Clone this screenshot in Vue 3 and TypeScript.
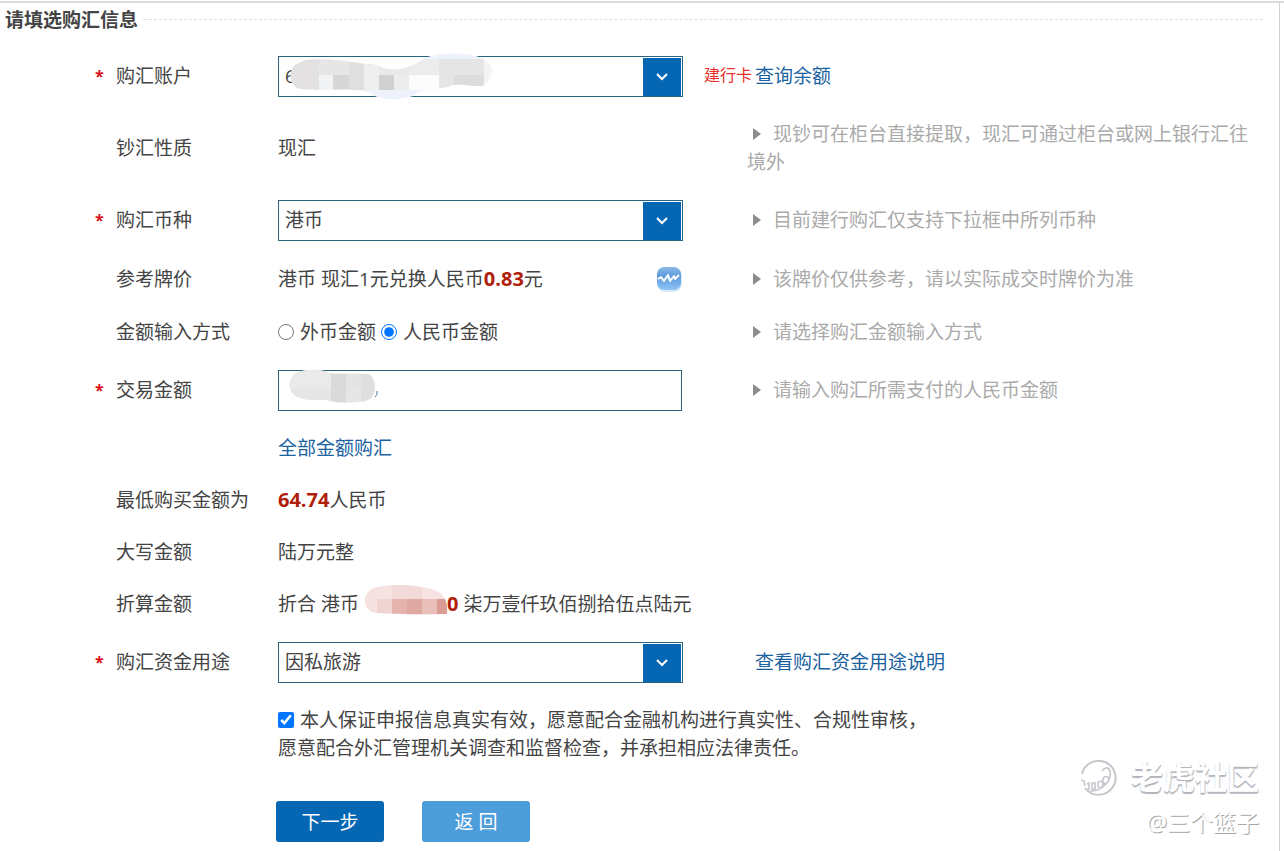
<script setup lang="ts">
import { ref } from 'vue'

const account = ref('6')
const currency = ref('港币')
const purpose = ref('因私旅游')
const mode = ref<'foreign' | 'cny'>('cny')
const amount = ref('')
const agreed = ref(true)
</script>

<template>
  <main class="page">
    <form class="form" @submit.prevent>
      <header class="heading">
        <h1>请填选购汇信息</h1>
        <span class="rule"></span>
      </header>

      <div class="row tall">
        <span class="star">*</span>
        <label class="label" for="account">购汇账户</label>
        <div class="field">
          <div class="select">
            <select id="account" v-model="account">
              <option value="6">6</option>
            </select>
            <span class="drop"><svg width="14" height="10" viewBox="0 0 14 10"><path d="M2 2l5 5 5-5" /></svg></span>
          </div>
          <svg class="mask mask-account" width="210" height="50" viewBox="0 0 210 50">
            <defs>
              <clipPath id="clip-account">
                <path d="M20 7C50 4 65 10 91 12C108 21 124 15 137 7C149 -2 191 -1 199 7C211 10 208 31 196 33C180 33 173 29 163 34C148 36 133 37 128 43C115 48 91 47 86 40C70 34 40 38 16 36C4 34 3 20 10 12Z" />
              </clipPath>
            </defs>
            <g clip-path="url(#clip-account)">
              <path fill="#eef2fb" d="M0 0h210v50H0z" />
              <path fill="#e3e1e2" d="M0 0h34v37H0z" />
              <path fill="#e6e6e6" d="M34 0h62v22H34z" />
              <path fill="#f2f3f4" d="M34 22h14v15H34z" />
              <path fill="#d8d7d8" d="M48 22h16v15H48z" />
              <path fill="#e0dfe0" d="M64 8h15v29H64z" />
              <path fill="#efefef" d="M79 8h15v29H79z" />
              <path fill="#e9e9e9" d="M94 8h30v14H94z" />
              <path fill="#d2d1d2" d="M94 22h15v15H94z" />
              <path fill="#ededed" d="M109 22h15v15h-15z" />
              <path fill="#ececec" d="M124 6h30v16h-30z" />
              <path fill="#fcfcfc" d="M124 22h30v15h-30z" />
              <path fill="#e5e5e5" d="M154 6h45v31h-45z" />
              <path fill="#dcdcdc" d="M169 22h30v15h-30z" />
              <path fill="#f4f4f6" d="M199 4h11v33h-11z" />
            </g>
          </svg>
        </div>
        <div class="aside near"><small>建行卡</small><a href="#">查询余额</a></div>
      </div>

      <div class="row double">
        <span class="label">钞汇性质</span>
        <div class="field">现汇</div>
        <p class="aside hint"><i class="tri"></i>现钞可在柜台直接提取，现汇可通过柜台或网上银行汇往境外</p>
      </div>

      <div class="row tall">
        <span class="star">*</span>
        <label class="label" for="currency">购汇币种</label>
        <div class="field">
          <div class="select">
            <select id="currency" v-model="currency">
              <option>港币</option>
            </select>
            <span class="drop"><svg width="14" height="10" viewBox="0 0 14 10"><path d="M2 2l5 5 5-5" /></svg></span>
          </div>
        </div>
        <p class="aside hint"><i class="tri"></i>目前建行购汇仅支持下拉框中所列币种</p>
      </div>

      <div class="row quote">
        <span class="label">参考牌价</span>
        <div class="field rate">
          <span>港币 现汇1元兑换人民币<b>0.83</b>元</span>
          <button type="button" class="chart" aria-label="牌价走势">
            <svg width="26" height="26" viewBox="0 0 26 26">
              <defs>
                <linearGradient id="chart-fill" x2="0" y2="1">
                  <stop offset="0" stop-color="#8dbbe8" />
                  <stop offset=".4" stop-color="#5c9bdc" />
                  <stop offset="1" stop-color="#8fc4f5" />
                </linearGradient>
              </defs>
              <rect x="0" y="2" width="25" height="24" rx="8" fill="#d8e9f8" />
              <rect x="0" y="1" width="24" height="23" rx="7" fill="url(#chart-fill)" />
              <path d="M1 13l3-2 3 4 4-6 2 6 4-5 1 3 4-4" fill="none" stroke="#fff" stroke-width="2" stroke-linejoin="round" />
            </svg>
          </button>
        </div>
        <p class="aside hint"><i class="tri"></i>该牌价仅供参考，请以实际成交时牌价为准</p>
      </div>

      <div class="row">
        <span class="label">金额输入方式</span>
        <div class="field radios">
          <label><input v-model="mode" type="radio" name="mode" value="foreign" />外币金额</label>
          <label><input v-model="mode" type="radio" name="mode" value="cny" />人民币金额</label>
        </div>
        <p class="aside hint"><i class="tri"></i>请选择购汇金额输入方式</p>
      </div>

      <div class="row tall">
        <span class="star">*</span>
        <label class="label" for="amount">交易金额</label>
        <div class="field">
          <input id="amount" v-model="amount" class="text" type="text" />
          <svg class="mask mask-amount" width="94" height="36" viewBox="0 0 94 36">
            <defs>
              <clipPath id="clip-amount">
                <path d="M12 3C22 0 36 0 43 4C58 5 72 4 82 5C91 8 91 28 82 31C70 35 50 34 40 31C28 31 16 32 8 26C1 20 2 7 12 3Z" />
              </clipPath>
            </defs>
            <g clip-path="url(#clip-amount)">
              <path fill="#e6e6e6" d="M0 0h94v36H0z" />
              <path fill="#eaeaea" d="M0 0h45v19H0z" />
              <path fill="#dadada" d="M45 5h15v30H45z" />
              <path fill="#e4e4e4" d="M60 5h15v15H60z" />
              <path fill="#dfdfdf" d="M75 5h19v30H75z" />
            </g>
            <path d="M91 22q1 4-2 6" fill="none" stroke="#4f7692" />
          </svg>
        </div>
        <p class="aside hint"><i class="tri"></i>请输入购汇所需支付的人民币金额</p>
      </div>

      <div class="row">
        <div class="field"><a href="#">全部金额购汇</a></div>
      </div>

      <div class="row">
        <span class="label">最低购买金额为</span>
        <div class="field"><b>64.74</b>人民币</div>
      </div>

      <div class="row">
        <span class="label">大写金额</span>
        <div class="field">陆万元整</div>
      </div>

      <div class="row">
        <span class="label">折算金额</span>
        <div class="field converted">
          <span>折合 港币</span>
          <svg width="84" height="32" viewBox="0 0 84 32">
            <defs>
              <clipPath id="clip-converted">
                <path d="M13 2C28 -1 60 0 72 6C80 9 84 16 83 29C65 29 45 30 14 28C4 28 0 21 1 13C3 7 6 4 13 2Z" />
              </clipPath>
            </defs>
            <g clip-path="url(#clip-converted)">
              <path fill="#f6e2e1" d="M0 0h84v32H0z" />
              <path fill="#f2dad8" d="M28 0h30v14H28z" />
              <path fill="#f0d4d1" d="M13 14h15v17H13z" />
              <path fill="#e5b3ad" d="M28 14h15v17H28z" />
              <path fill="#dfa8a2" d="M43 14h15v17H43z" />
              <path fill="#e9bfba" d="M58 14h15v17H58z" />
              <path fill="#d99b94" d="M73 14h11v17H73z" />
            </g>
          </svg>
          <b>0</b>
          <span>柒万壹仟玖佰捌拾伍点陆元</span>
        </div>
      </div>

      <div class="row tall">
        <span class="star">*</span>
        <label class="label" for="purpose">购汇资金用途</label>
        <div class="field">
          <div class="select">
            <select id="purpose" v-model="purpose">
              <option>因私旅游</option>
            </select>
            <span class="drop"><svg width="14" height="10" viewBox="0 0 14 10"><path d="M2 2l5 5 5-5" /></svg></span>
          </div>
        </div>
        <div class="aside far"><a href="#">查看购汇资金用途说明</a></div>
      </div>

      <label class="agree">
        <input v-model="agreed" type="checkbox" />本人保证申报信息真实有效，愿意配合金融机构进行真实性、合规性审核，<br />愿意配合外汇管理机关调查和监督检查，并承担相应法律责任。
      </label>

      <div class="actions">
        <button type="submit" class="btn next">下一步</button>
        <button type="button" class="btn back">返 回</button>
      </div>
    </form>

    <div class="watermark">
      <div class="brand">
        <svg width="38" height="38" viewBox="0 0 38 38" fill="none" stroke="#c6c7cc" stroke-width="2">
          <path d="M2 16A17 17 0 1 1 5 30" />
          <path d="M1 22l3 1 1 5M7 26l2-1v6l-2 1M12 25h3v6h-3zM18 24q4-2 5 1t-2 5q-4 0-3-6M24 19q5-1 5 2t-4 5q-4-3-1-7M22 13q4-5 7-2c3 5 1 12-6 18q-5 4-13 4" stroke-width="1.6" />
        </svg>
        <span>老虎社区</span>
      </div>
      <div class="author">@三个篮子</div>
    </div>
  </main>
</template>

<style>
body {
  margin: 0;
  background: #fff;
}
</style>

<style scoped>
.page {
  position: relative;
  box-sizing: border-box;
  min-height: 100vh;
  padding-top: 1px;
  padding-right: 4px;
  font: 19px/28px "Open Sans", "Noto Sans CJK SC", sans-serif;
  color: #444;
}
.page::before {
  content: "";
  position: absolute;
  inset: 1px 0 auto;
  height: 2px;
  background: #d9dcd9;
}
.form {
  box-sizing: border-box;
  min-height: calc(100vh - 1px);
  border-right: 1px solid #d2d2d2;
}
.heading {
  display: flex;
  align-items: center;
  gap: 6px;
  height: 37px;
  padding: 0 16px 6px 5px;
}
h1 {
  margin: 0;
  font-size: 19px;
  font-weight: 700;
}
.rule {
  flex: 1;
  border-top: 1px dashed #dedede;
}
.row {
  display: grid;
  grid-template-columns: 95px 21px 162px 405px minmax(0, 1fr);
  align-items: center;
  min-height: 52px;
}
.row.tall {
  min-height: 64px;
}
.row.double {
  min-height: 80px;
}
.row.quote {
  min-height: 54px;
}
.star {
  grid-column: 2;
  color: #d9101a;
  font-weight: 700;
  font-size: 16px;
}
.label {
  grid-column: 3;
}
.field {
  grid-column: 4;
  position: relative;
}
.aside {
  grid-column: 5;
}
.near {
  padding-left: 21px;
}
.near small {
  margin-right: 3px;
  font-size: 16px;
  vertical-align: 2px;
  line-height: 20px;
  color: #e8302c;
}
.far {
  padding-left: 72px;
}
.hint {
  margin: 0;
  padding: 0 20px 0 64px;
  color: #aaa;
}
.tri {
  display: inline-block;
  margin: 0 12px 0 6px;
  border: solid transparent;
  border-width: 6px 0 6px 8px;
  border-left-color: #8c8c8c;
  vertical-align: 1px;
}
a {
  color: #1a629f;
  text-decoration: none;
}
b {
  color: #b02008;
  font-size: 20px;
}
.select {
  position: relative;
  box-sizing: border-box;
  height: 41px;
  border: 1px solid #2a647f;
}
.select select {
  display: block;
  box-sizing: border-box;
  width: 100%;
  height: 100%;
  padding: 0 46px 0 6px;
  border: 0;
  border-radius: 0;
  background: #fff;
  color: inherit;
  font: inherit;
  appearance: none;
}
.drop {
  position: absolute;
  inset: 1px 1px 0 auto;
  display: flex;
  align-items: center;
  justify-content: center;
  width: 38px;
  background: #0566b3;
  pointer-events: none;
}
.drop path {
  fill: none;
  stroke: #fff;
  stroke-width: 2;
}
.text {
  display: block;
  box-sizing: border-box;
  width: 404px;
  height: 41px;
  padding: 0 8px;
  border: 1px solid #2a647f;
  font: inherit;
  color: inherit;
}
.mask {
  position: absolute;
  pointer-events: none;
}
.mask-account {
  top: -3px;
  left: 7px;
}
.mask-amount {
  top: -1px;
  left: 8px;
}
.rate {
  display: flex;
  align-items: center;
  justify-content: space-between;
}
.chart {
  display: flex;
  margin: 0;
  padding: 0;
  border: 0;
  background: none;
}
.radios {
  display: flex;
  gap: 5px;
}
.radios input,
.agree input {
  width: 16px;
  height: 16px;
  margin: 0 6px 0 0;
  accent-color: #0075ff;
  vertical-align: -1px;
}
.converted {
  display: flex;
  align-items: center;
  gap: 5px;
  white-space: nowrap;
}
.converted svg {
  flex: none;
  margin: -6px -6px 0 0;
}
.agree {
  display: block;
  margin: 12px 0 0 278px;
}
.actions {
  display: flex;
  gap: 38px;
  margin: 39px 0 0 276px;
}
.btn {
  width: 108px;
  height: 41px;
  padding: 0;
  border: 0;
  border-radius: 3px;
  color: #fff;
  font: inherit;
}
.next {
  background: #0566b3;
}
.back {
  background: #4d9ddb;
}
.watermark {
  position: absolute;
  right: 25px;
  bottom: 12px;
  text-align: right;
  color: #fff;
  pointer-events: none;
}
.brand {
  display: flex;
  align-items: center;
  gap: 13px;
  font-size: 32px;
  line-height: 48px;
  font-weight: 700;
  text-shadow: 0 2px 1px #b4b5bc, 1px 1px 0 #c8c9ce;
}
.author {
  margin-top: 4px;
  font-size: 23px;
  line-height: 34px;
  text-shadow: 1px 1px 0 #a6a6a6;
}
</style>
